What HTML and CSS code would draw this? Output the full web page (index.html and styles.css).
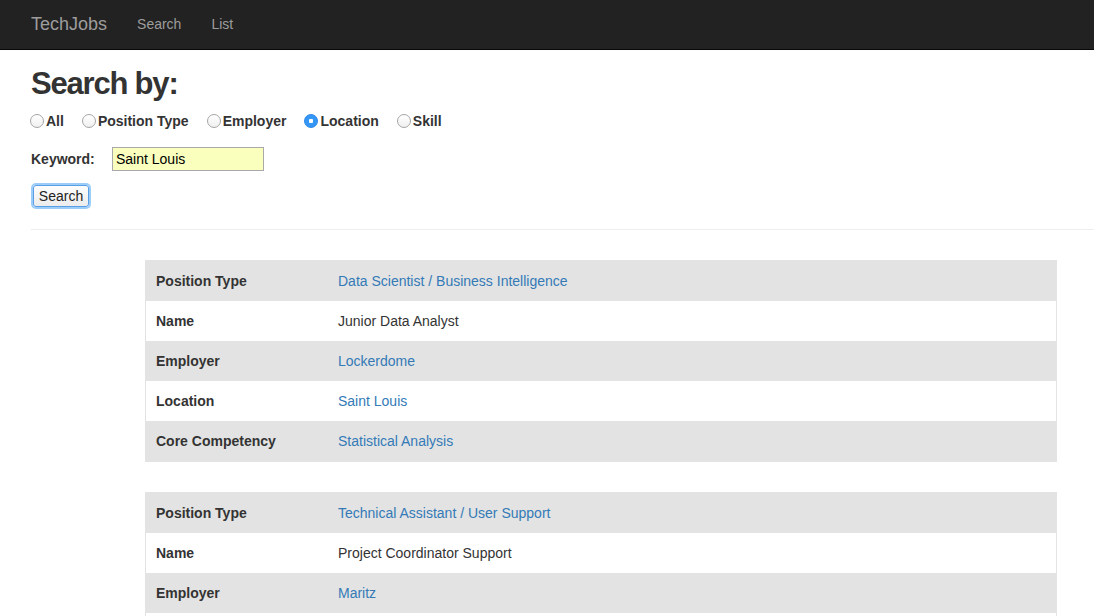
FILE: index.html
```html
<!DOCTYPE html>
<html>
<head>
<meta charset="utf-8">
<title>TechJobs</title>
<link rel="stylesheet" href="styles.css">
</head>
<body>
<nav class="navbar">
  <a class="brand" href="#">TechJobs</a>
  <a class="nav-link" href="#">Search</a>
  <a class="nav-link" href="#">List</a>
</nav>
<main class="page">
  <h1 class="title">Search by:</h1>
  <form class="search-form">
    <div class="radios">
      <label class="radio"><input type="radio" name="type"><span>All</span></label>
      <label class="radio"><input type="radio" name="type"><span>Position Type</span></label>
      <label class="radio"><input type="radio" name="type"><span>Employer</span></label>
      <label class="radio"><input type="radio" name="type" checked><span>Location</span></label>
      <label class="radio"><input type="radio" name="type"><span>Skill</span></label>
    </div>
    <div class="keyword-row">
      <label class="keyword-label" for="kw">Keyword:</label>
      <input class="keyword-input" id="kw" type="text" value="Saint Louis">
    </div>
    <div class="button-row">
      <button class="search-btn" type="button">Search</button>
    </div>
  </form>
  <hr class="divider">
  <section class="results">
    <table class="job">
      <tr class="odd"><th>Position Type</th><td><a href="#">Data Scientist / Business Intelligence</a></td></tr>
      <tr><th>Name</th><td>Junior Data Analyst</td></tr>
      <tr class="odd"><th>Employer</th><td><a href="#">Lockerdome</a></td></tr>
      <tr><th>Location</th><td><a href="#">Saint Louis</a></td></tr>
      <tr class="odd"><th>Core Competency</th><td><a href="#">Statistical Analysis</a></td></tr>
    </table>
    <table class="job">
      <tr class="odd"><th>Position Type</th><td><a href="#">Technical Assistant / User Support</a></td></tr>
      <tr><th>Name</th><td>Project Coordinator Support</td></tr>
      <tr class="odd"><th>Employer</th><td><a href="#">Maritz</a></td></tr>
      <tr><th>Location</th><td><a href="#">Saint Louis</a></td></tr>
      <tr class="odd"><th>Core Competency</th><td><a href="#">Customer Service</a></td></tr>
    </table>
  </section>
</main>
</body>
</html>
```

FILE: styles.css
```css
html, body {
  margin: 0;
  padding: 0;
}
body {
  font-family: "Liberation Sans", Arial, Helvetica, sans-serif;
  font-size: 14px;
  line-height: 20px;
  color: #333;
  background: #fff;
  overflow: hidden;
}
a {
  color: #337ab7;
  text-decoration: none;
}
.navbar {
  height: 49px;
  background: #222;
  border-bottom: 1px solid #080808;
  display: flex;
  align-items: center;
  padding-left: 31px;
  padding-bottom: 2px;
  box-sizing: border-box;
  height: 50px;
}
.brand {
  color: #9d9d9d;
  font-size: 18px;
  margin-right: 30px;
}
.nav-link {
  color: #9d9d9d;
  font-size: 14px;
  margin-right: 30px;
}
.page {
  padding-left: 31px;
}
.title {
  font-size: 31px;
  font-weight: bold;
  letter-spacing: -1.2px;
  line-height: 36px;
  margin: 0;
  padding-top: 16px;
  color: #333;
}
.search-form {
  display: flex;
  flex-direction: column;
}
.radios {
  display: flex;
  margin-top: 9px;
  height: 20px;
  align-items: center;
}
.radio {
  display: flex;
  align-items: center;
  font-weight: bold;
  margin-right: 19px;
  margin-left: -1px;
}
.radio input {
  appearance: none;
  -webkit-appearance: none;
  width: 14px;
  height: 14px;
  margin: 0 2px 0 0;
  border: 1px solid #a6a6a6;
  border-radius: 50%;
  background: linear-gradient(#fff, #f0f0f0);
  box-sizing: border-box;
}
.radio input:checked {
  border-color: #2a86e8;
  background: radial-gradient(circle, #fff 0 2px, #3496f5 2.5px);
}
.keyword-row {
  display: flex;
  align-items: center;
  margin-top: 16px;
}
.keyword-label {
  font-weight: bold;
  width: 81px;
}
.keyword-input {
  width: 152px;
  height: 24px;
  box-sizing: border-box;
  border: 1px solid #a9a9a9;
  background: #faffbd;
  font-family: "Liberation Sans", Arial, sans-serif;
  font-size: 14px;
  padding: 0 3px;
  color: #000;
}
.button-row {
  display: flex;
  margin-top: 12px;
  height: 24px;
}
.search-btn {
  width: 56px;
  height: 22px;
  border: 1px solid #5a9fe6;
  border-radius: 3px;
  background: linear-gradient(#fdfdfd, #ececec);
  box-shadow: 0 0 0 2px #9ccdf8;
  font-family: "Liberation Sans", Arial, sans-serif;
  font-size: 14px;
  color: #222;
  padding: 0;
  margin-left: 2px;
  margin-top: 2px;
}
.divider {
  border: 0;
  border-top: 1px solid #eee;
  margin: 22px 0 0 0;
}
.results {
  padding-left: 114px;
  padding-top: 30px;
  display: flex;
  flex-direction: column;
  gap: 30px;
}
.job {
  width: 912px;
  border-collapse: collapse;
  border: 1px solid #e3e3e3;
}
.job tr {
  height: 40px;
}
.job tr.odd {
  background: #e3e3e3;
}
.job th {
  width: 162px;
  text-align: left;
  font-weight: bold;
  padding: 10px 10px;
  color: #333;
}
.job td {
  padding: 10px 10px;
  color: #333;
}
```
